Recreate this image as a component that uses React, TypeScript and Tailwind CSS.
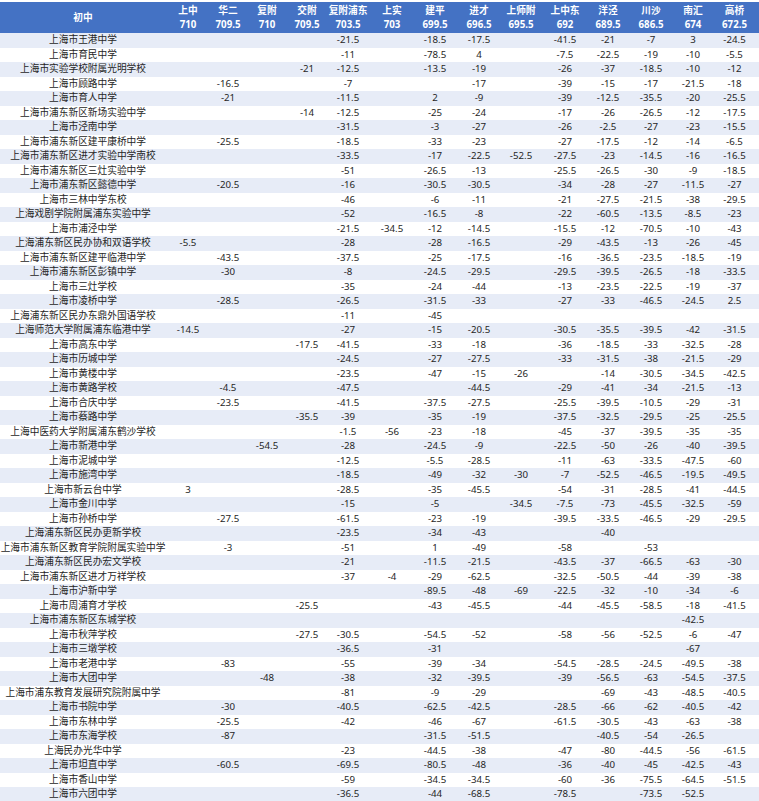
const headers: [string, string][] = [
  ['上中', '710'],
  ['华二', '709.5'],
  ['复附', '710'],
  ['交附', '709.5'],
  ['复附浦东', '703.5'],
  ['上实', '703'],
  ['建平', '699.5'],
  ['进才', '696.5'],
  ['上师附', '695.5'],
  ['上中东', '692'],
  ['洋泾', '689.5'],
  ['川沙', '686.5'],
  ['南汇', '674'],
  ['高桥', '672.5'],
]

// school, then 14 score gaps in header order ('' = blank)
const rows: [string, string][] = [
  ['上海市王港中学', ',,,,-21.5,,-18.5,-17.5,,-41.5,-21,-7,3,-24.5'],
  ['上海市育民中学', ',,,,-11,,-78.5,4,,-7.5,-22.5,-19,-10,-5.5'],
  ['上海市实验学校附属光明学校', ',,,-21,-12.5,,-13.5,-19,,-26,-37,-18.5,-10,-12'],
  ['上海市顾路中学', ',-16.5,,,-7,,,-17,,-39,-15,-17,-21.5,-18'],
  ['上海市育人中学', ',-21,,,-11.5,,2,-9,,-39,-12.5,-35.5,-20,-25.5'],
  ['上海市浦东新区新场实验中学', ',,,-14,-12.5,,-25,-24,,-17,-26,-26.5,-12,-17.5'],
  ['上海市泾南中学', ',,,,-31.5,,-3,-27,,-26,-2.5,-27,-23,-15.5'],
  ['上海市浦东新区建平康桥中学', ',-25.5,,,-18.5,,-33,-23,,-27,-17.5,-12,-14,-6.5'],
  ['上海市浦东新区进才实验中学南校', ',,,,-33.5,,-17,-22.5,-52.5,-27.5,-23,-14.5,-16,-16.5'],
  ['上海市浦东新区三灶实验中学', ',,,,-51,,-26.5,-13,,-25.5,-26.5,-30,-9,-18.5'],
  ['上海市浦东新区懿德中学', ',-20.5,,,-16,,-30.5,-30.5,,-34,-28,-27,-11.5,-27'],
  ['上海市三林中学东校', ',,,,-46,,-6,-11,,-21,-27.5,-21.5,-38,-29.5'],
  ['上海戏剧学院附属浦东实验中学', ',,,,-52,,-16.5,-8,,-22,-60.5,-13.5,-8.5,-23'],
  ['上海市浦泾中学', ',,,,-21.5,-34.5,-12,-14.5,,-15.5,-12,-70.5,-10,-43'],
  ['上海浦东新区民办协和双语学校', '-5.5,,,,-28,,-28,-16.5,,-29,-43.5,-13,-26,-45'],
  ['上海市浦东新区建平临港中学', ',-43.5,,,-37.5,,-25,-17.5,,-16,-36.5,-23.5,-18.5,-19'],
  ['上海市浦东新区彭镇中学', ',-30,,,-8,,-24.5,-29.5,,-29.5,-39.5,-26.5,-18,-33.5'],
  ['上海市三灶学校', ',,,,-35,,-24,-44,,-13,-23.5,-22.5,-19,-37'],
  ['上海市凌桥中学', ',-28.5,,,-26.5,,-31.5,-33,,-27,-33,-46.5,-24.5,2.5'],
  ['上海浦东新区民办东鼎外国语学校', ',,,,-11,,-45,,,,,,,'],
  ['上海师范大学附属浦东临港中学', '-14.5,,,,-27,,-15,-20.5,,-30.5,-35.5,-39.5,-42,-31.5'],
  ['上海市高东中学', ',,,-17.5,-41.5,,-33,-18,,-36,-18.5,-33,-32.5,-28'],
  ['上海市历城中学', ',,,,-24.5,,-27,-27.5,,-33,-31.5,-38,-21.5,-29'],
  ['上海市黄楼中学', ',,,,-23.5,,-47,-15,-26,,-14,-30.5,-34.5,-42.5'],
  ['上海市黄路学校', ',-4.5,,,-47.5,,,-44.5,,-29,-41,-34,-21.5,-13'],
  ['上海市合庆中学', ',-23.5,,,-41.5,,-37.5,-27.5,,-25.5,-39.5,-10.5,-29,-31'],
  ['上海市蔡路中学', ',,,-35.5,-39,,-35,-19,,-37.5,-32.5,-29.5,-25,-25.5'],
  ['上海中医药大学附属浦东鹤沙学校', ',,,,-1.5,-56,-23,-18,,-45,-37,-39.5,-35,-35'],
  ['上海市新港中学', ',,-54.5,,-28,,-24.5,-9,,-22.5,-50,-26,-40,-39.5'],
  ['上海市泥城中学', ',,,,-12.5,,-5.5,-28.5,,-11,-63,-33.5,-47.5,-60'],
  ['上海市施湾中学', ',,,,-18.5,,-49,-32,-30,-7,-52.5,-46.5,-19.5,-49.5'],
  ['上海市新云台中学', '3,,,,-28.5,,-35,-45.5,,-54,-31,-28.5,-41,-44.5'],
  ['上海市金川中学', ',,,,-15,,-5,,-34.5,-7.5,-73,-45.5,-32.5,-59'],
  ['上海市孙桥中学', ',-27.5,,,-61.5,,-23,-19,,-39.5,-33.5,-46.5,-29,-29.5'],
  ['上海浦东新区民办更新学校', ',,,,-23.5,,-34,-43,,,-40,,,'],
  ['上海市浦东新区教育学院附属实验中学', ',-3,,,-51,,1,-49,,-58,,-53,,'],
  ['上海浦东新区民办宏文学校', ',,,,-21,,-11.5,-21.5,,-43.5,-37,-66.5,-63,-30'],
  ['上海市浦东新区进才万祥学校', ',,,,-37,-4,-29,-62.5,,-32.5,-50.5,-44,-39,-38'],
  ['上海市沪新中学', ',,,,,,-89.5,-48,-69,-22.5,-32,-10,-34,-6'],
  ['上海市周浦育才学校', ',,,-25.5,,,-43,-45.5,,-44,-45.5,-58.5,-18,-41.5'],
  ['上海市浦东新区东城学校', ',,,,,,,,,,,,-42.5,'],
  ['上海市秋萍学校', ',,,-27.5,-30.5,,-54.5,-52,,-58,-56,-52.5,-6,-47'],
  ['上海市三墩学校', ',,,,-36.5,,-31,,,,,,-67,'],
  ['上海市老港中学', ',-83,,,-55,,-39,-34,,-54.5,-28.5,-24.5,-49.5,-38'],
  ['上海市大团中学', ',,-48,,-38,,-32,-39.5,,-39,-56.5,-63,-54.5,-37.5'],
  ['上海市浦东教育发展研究院附属中学', ',,,,-81,,-9,-29,,,-69,-43,-48.5,-40.5'],
  ['上海市书院中学', ',-30,,,-40.5,,-62.5,-42.5,,-28.5,-66,-62,-40.5,-42'],
  ['上海市东林中学', ',-25.5,,,-42,,-46,-67,,-61.5,-30.5,-43,-63,-38'],
  ['上海市东海学校', ',-87,,,,,-31.5,-51.5,,,-40.5,-54,-26.5,'],
  ['上海民办光华中学', ',,,,-23,,-44.5,-38,,-47,-80,-44.5,-56,-61.5'],
  ['上海市坦直中学', ',-60.5,,,-69.5,,-80.5,-48,,-36,-40,-45,-42.5,-43'],
  ['上海市香山中学', ',,,,-59,,-34.5,-34.5,,-60,-36,-75.5,-64.5,-51.5'],
  ['上海市六团中学', ',,,,-36.5,,-44,-68.5,,-78.5,,-73.5,-52.5,'],
]

const cols =
  'grid grid-cols-[166px_44px_36px_42px_38px_44px_44px_42px_46px_38px_50px_36px_50px_34px_49px]'

export default function App() {
  return (
    <div className="w-[759px] h-[801px] overflow-hidden bg-white pt-[2px] font-['Noto_Sans','Noto_Sans_CJK_SC',sans-serif] text-[9.7px] leading-none">
      {/* header */}
      <div className={`${cols} h-[31px] bg-[#4472c4] text-white font-bold`}>
        <div className="flex items-center justify-center">初中</div>
        {headers.map(([name, score]) => (
          <div key={name} className="flex flex-col items-center justify-center gap-[4px] whitespace-nowrap">
            <span>{name}</span>
            <span>{score}</span>
          </div>
        ))}
      </div>

      {/* body */}
      {rows.map(([school, data], i) => (
        <div
          key={school}
          className={`${cols} h-[14.5px] text-[#262626] ${i % 2 === 0 ? 'bg-[#e7ecf7]' : 'bg-white'}`}
        >
          <div className="flex items-center justify-center whitespace-nowrap">{school}</div>
          {data.split(',').map((v, j) => (
            <div key={j} className="flex items-center justify-center whitespace-nowrap">
              {v}
            </div>
          ))}
        </div>
      ))}
    </div>
  )
}
